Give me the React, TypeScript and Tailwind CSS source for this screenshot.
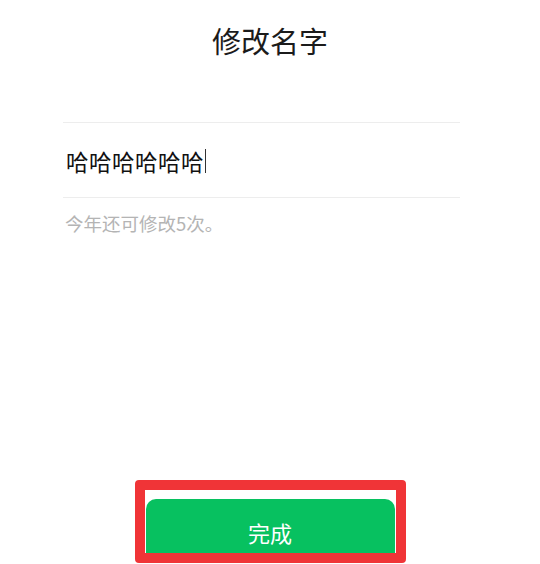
import { useState } from "react";

const FONT = { fontFamily: '"Noto Sans CJK SC", "Noto Sans", sans-serif' };

export default function App() {
  const [name] = useState("哈哈哈哈哈哈");

  return (
    <div className="w-[540px] h-[564px] bg-white flex flex-col overflow-hidden" style={FONT}>
      <div className="h-[80px] flex items-center justify-center text-[29px] text-[#1b1b1b] leading-none">
        修改名字
      </div>

      <div className="mt-[42px] ml-[63px] w-[397px]">
        <div className="border-t border-b border-[#ededed] h-[76px] flex items-center pt-[2px]">
          <span className="text-[22.5px] text-[#111] leading-none pl-[3px] tracking-[0.5px]">{name}</span>
          <span className="w-[1px] h-[24px] bg-[#333] ml-[1px]" />
        </div>
        <div className="mt-[14px] text-[18.5px] text-[#b4b4b4] leading-[22px] pl-[2px]">
          今年还可修改5次。
        </div>
      </div>

      <div className="mt-auto mb-[1px] mx-auto w-[271px] h-[83px] border-[10px] border-[#f03437] rounded-[4px] bg-white overflow-hidden pt-[9px] px-[1px]">
        <button className="w-full h-[64px] rounded-[10px] bg-[#07c160] text-white text-[22px] leading-none flex items-start justify-center pt-[22px]">
          完成
        </button>
      </div>
    </div>
  );
}
